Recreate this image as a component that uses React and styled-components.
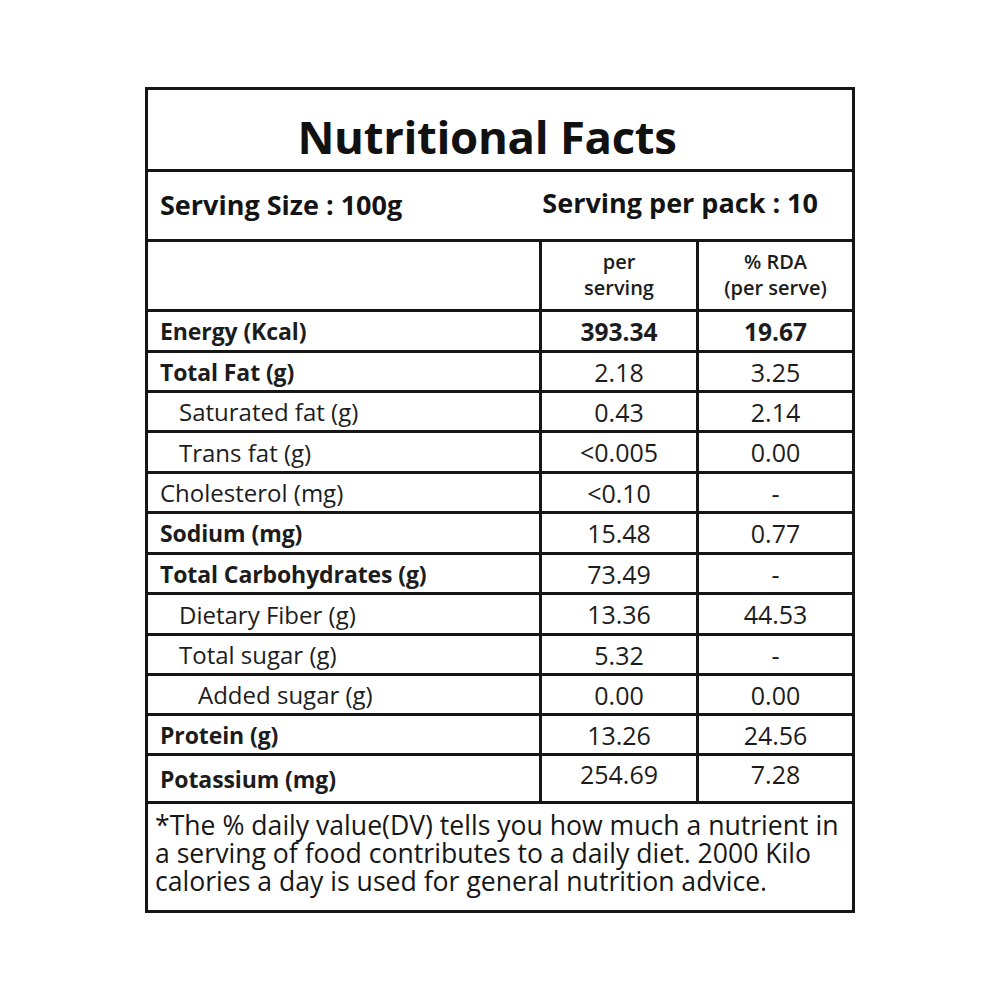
import React from 'react'
import styled, { createGlobalStyle } from 'styled-components'

const rows = [
    { label: 'Energy (Kcal)', bold: true, per: '393.34', rda: '19.67', strong: true },
    { label: 'Total Fat (g)', bold: true, per: '2.18', rda: '3.25' },
    { label: 'Saturated fat (g)', indent: 1, per: '0.43', rda: '2.14' },
    { label: 'Trans fat (g)', indent: 1, per: '<0.005', rda: '0.00' },
    { label: 'Cholesterol (mg)', per: '<0.10', rda: '-' },
    { label: 'Sodium (mg)', bold: true, per: '15.48', rda: '0.77' },
    { label: 'Total Carbohydrates (g)', bold: true, per: '73.49', rda: '-' },
    { label: 'Dietary Fiber (g)', indent: 1, per: '13.36', rda: '44.53' },
    { label: 'Total sugar (g)', indent: 1, per: '5.32', rda: '-' },
    { label: 'Added sugar (g)', indent: 2, per: '0.00', rda: '0.00' },
    { label: 'Protein (g)', bold: true, per: '13.26', rda: '24.56' },
    { label: 'Potassium (mg)', bold: true, per: '254.69', rda: '7.28', raised: true },
]

const App = () => {
    return (
        <>
            <GlobalStyle />
            <Page>
                <Label>
                    <Title>Nutritional Facts</Title>
                    <ServingRow>
                        <span>Serving Size : 100g</span>
                        <span>Serving per pack : 10</span>
                    </ServingRow>
                    <HeadCell />
                    <HeadCell>per<br />serving</HeadCell>
                    <HeadCell>% RDA<br />(per serve)</HeadCell>
                    {rows.map((row) => (
                        <React.Fragment key={row.label}>
                            <NameCell $bold={row.bold} $indent={row.indent || 0}>{row.label}</NameCell>
                            <ValueCell $bold={row.strong} $raised={row.raised}>{row.per}</ValueCell>
                            <ValueCell $bold={row.strong} $raised={row.raised}>{row.rda}</ValueCell>
                        </React.Fragment>
                    ))}
                    <Footnote>
                        *The % daily value(DV) tells you how much a nutrient in<br />
                        a serving of food contributes to a daily diet. 2000 Kilo<br />
                        calories a day is used for general nutrition advice.
                    </Footnote>
                </Label>
            </Page>
        </>
    )
}

export default App

const GlobalStyle = createGlobalStyle`
    body {
        margin: 0;
        background: #fff;
        font-family: "Open Sans", "Liberation Sans", sans-serif;
        color: #1c1c1c;
    }
`

const Page = styled.div({
    width: "1000px",
    height: "1000px",
    paddingTop: "87px",
    boxSizing: "border-box",
    display: "flex",
    justifyContent: "center",
    alignItems: "flex-start"
})

const Label = styled.div({
    display: "grid",
    gridTemplateColumns: "391px 154px 153px",
    gridTemplateRows: "79px 67px 67px 38px 37px 37px 38px 37px 38px 37px 38px 37px 37px 37px 45px 106px",
    gap: "3px",
    background: "#161616",
    border: "3px solid #161616"
})

const Cell = styled.div({
    background: "#fff",
    display: "flex",
    alignItems: "center",
    whiteSpace: "nowrap"
})

const Title = styled(Cell)({
    gridColumn: "1 / 4",
    justifyContent: "center",
    fontSize: "45.5px",
    fontWeight: "700",
    color: "#111",
    letterSpacing: "-0.3px",
    paddingTop: "12px",
    paddingRight: "26px"
})

const ServingRow = styled(Cell)({
    gridColumn: "1 / 4",
    justifyContent: "space-between",
    padding: "0 34px 2px 12px",
    fontSize: "27px",
    fontWeight: "700",
    color: "#141414",
    "& > span:last-child": {
        marginTop: "-5px"
    }
})

const HeadCell = styled(Cell)({
    justifyContent: "center",
    textAlign: "center",
    fontSize: "20px",
    fontWeight: "600",
    lineHeight: "26px",
    paddingBottom: "2px"
})

const NameCell = styled(Cell)(({ $bold, $indent }) => ({
    paddingLeft: `${12 + $indent * 19}px`,
    fontSize: $bold ? "23px" : "24px",
    fontWeight: $bold ? "700" : "400",
    letterSpacing: $bold ? "-0.1px" : "0"
}))

const ValueCell = styled(Cell)(({ $bold, $raised }) => ({
    justifyContent: "center",
    fontSize: $bold ? "24.5px" : "25px",
    fontWeight: $bold ? "700" : "400",
    paddingBottom: $raised ? "10px" : "0"
}))

const Footnote = styled(Cell)({
    gridColumn: "1 / 4",
    alignItems: "flex-start",
    padding: "7px 8px 0 7px",
    fontSize: "26.6px",
    lineHeight: "28px",
    color: "#161616"
})
